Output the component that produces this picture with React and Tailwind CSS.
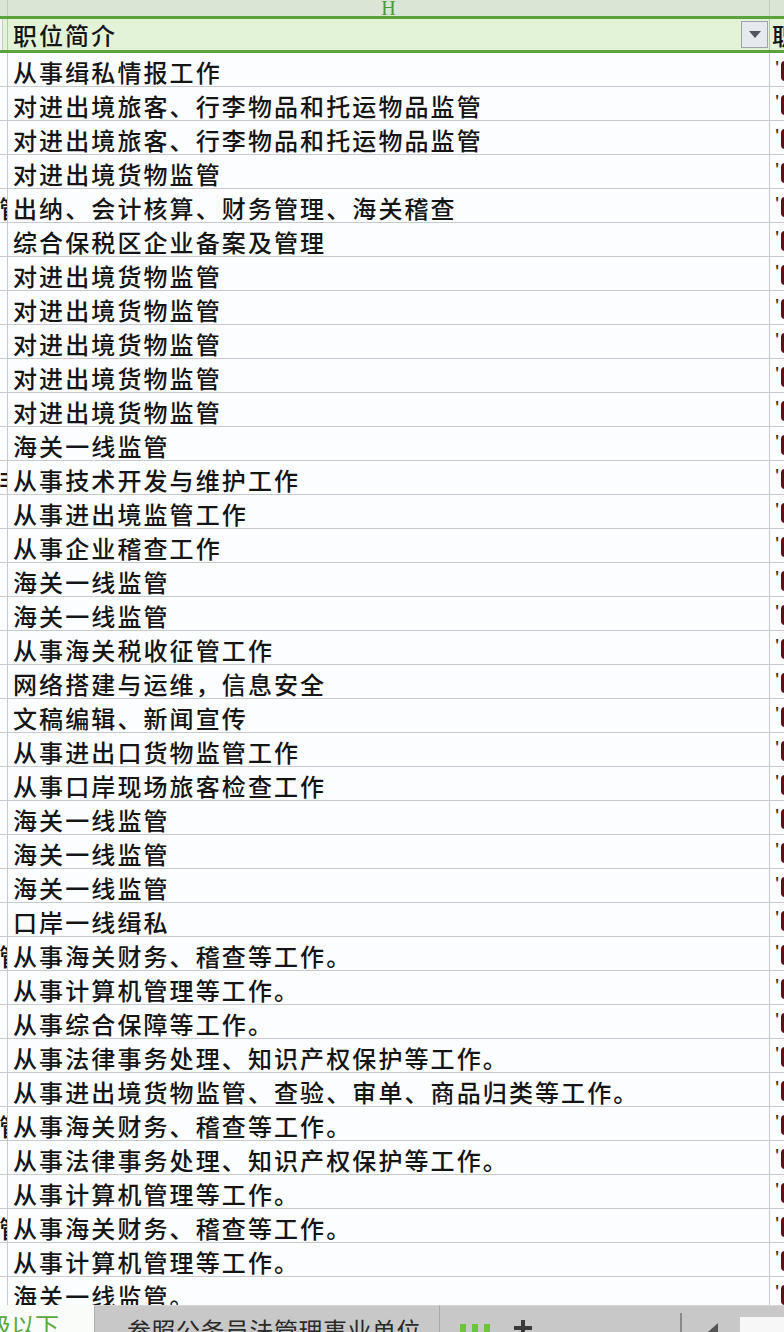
import React from "react";

const rows = [
  ["", "从事缉私情报工作"],
  ["", "对进出境旅客、行李物品和托运物品监管"],
  ["", "对进出境旅客、行李物品和托运物品监管"],
  ["", "对进出境货物监管"],
  ["管", "出纳、会计核算、财务管理、海关稽查"],
  ["", "综合保税区企业备案及管理"],
  ["", "对进出境货物监管"],
  ["", "对进出境货物监管"],
  ["", "对进出境货物监管"],
  ["", "对进出境货物监管"],
  ["", "对进出境货物监管"],
  ["", "海关一线监管"],
  ["非", "从事技术开发与维护工作"],
  ["", "从事进出境监管工作"],
  ["", "从事企业稽查工作"],
  ["", "海关一线监管"],
  ["", "海关一线监管"],
  ["", "从事海关税收征管工作"],
  ["", "网络搭建与运维，信息安全"],
  ["", "文稿编辑、新闻宣传"],
  ["", "从事进出口货物监管工作"],
  ["", "从事口岸现场旅客检查工作"],
  ["", "海关一线监管"],
  ["", "海关一线监管"],
  ["", "海关一线监管"],
  ["", "口岸一线缉私"],
  ["管", "从事海关财务、稽查等工作。"],
  ["", "从事计算机管理等工作。"],
  ["", "从事综合保障等工作。"],
  ["", "从事法律事务处理、知识产权保护等工作。"],
  ["", "从事进出境货物监管、查验、审单、商品归类等工作。"],
  ["管", "从事海关财务、稽查等工作。"],
  ["", "从事法律事务处理、知识产权保护等工作。"],
  ["", "从事计算机管理等工作。"],
  ["管", "从事海关财务、稽查等工作。"],
  ["", "从事计算机管理等工作。"],
  ["", "海关一线监管。"],
];

const cjk = { fontFamily: '"Noto Sans CJK SC", "Noto Sans", sans-serif' };

export default function App() {
  return (
    <div className="w-[784px] h-[1332px] overflow-hidden bg-white flex flex-col" style={cjk}>
      <div className="h-[1305px] overflow-hidden flex flex-col shrink-0">
        {/* column letter row */}
        <div className="h-[16px] flex bg-[#dbe5d6] shrink-0">
          <div className="w-[8px] border-r border-[#c3cbc0]" />
          <div className="w-[762px] flex justify-center items-end border-r border-[#c3cbc0] overflow-hidden">
            <span className="text-[20px] leading-[16px] text-[#4a9a36]" style={{ fontFamily: '"Liberation Serif", serif' }}>H</span>
          </div>
          <div className="flex-1" />
        </div>
        <div className="h-[3px] bg-[#5aa23c] shrink-0" />
        {/* filter header row */}
        <div className="h-[31px] flex bg-[#e3f3d8] shrink-0">
          <div className="w-[8px] flex">
            <div className="w-[3px] bg-[#f4f6f4] border-r border-[#c8ccc8]" />
            <div className="flex-1 border-r border-[#b9c4b5]" />
          </div>
          <div className="w-[762px] flex items-center border-r border-[#b9c4b5] relative pl-[5px]">
            <span className="text-[24px] tracking-[2px] font-medium text-[#151515] leading-none">职位简介</span>
            <div className="absolute right-[1px] top-[2px] w-[27px] h-[27px] bg-[#e6eaee] border border-[#9ea3aa] flex items-center justify-center">
              <svg width="12" height="7" viewBox="0 0 12 7"><path d="M0 0 L12 0 L6 7 Z" fill="#505560" /></svg>
            </div>
          </div>
          <div className="flex-1 overflow-hidden pl-[2px] flex items-center">
            <span className="text-[24px] font-medium text-[#151515] leading-none whitespace-nowrap">职位</span>
          </div>
        </div>
        <div className="h-[3px] bg-[#5aa23c] shrink-0" />
        {/* data rows */}
        {rows.map(([left, text], i) => (
          <div key={i} className="h-[34px] flex shrink-0 bg-[#fcfdff] border-b border-[#c9c9d4]">
            <div className="w-[8px] overflow-hidden flex justify-end items-center border-r border-[#c9c9d4]">
              {left && (
                <span className="text-[24px] font-medium leading-none text-[#151515] whitespace-nowrap translate-x-[16px] pt-[4px]">{left}</span>
              )}
            </div>
            <div className="w-[762px] flex items-center pl-[5px] pt-[4px] border-r border-[#c9c9d4] overflow-hidden">
              <span className="text-[24px] tracking-[2.1px] font-medium text-[#151515] leading-none whitespace-nowrap">{text}</span>
            </div>
            <div className="flex-1 overflow-hidden flex items-start pt-[6px] pl-[5px]">
              <span className="text-[13px] leading-none text-[#333] font-bold">'</span>
              <span className="ml-[2px] mt-[2px] w-[8px] h-[20px] rounded-full bg-[#5a1218] shrink-0" />
            </div>
          </div>
        ))}
      </div>
      {/* sheet tab bar */}
      <div className="flex-1 flex bg-[#c8c8c8] overflow-hidden">
        <div className="w-[95px] bg-[#fafcfa] border-r border-[#b0b0b0] overflow-hidden flex justify-end items-start pt-[8px] pr-[35px]">
          <span className="text-[24px] leading-none text-[#5aa83c] whitespace-nowrap">级以下</span>
        </div>
        <div className="w-[345px] border-t border-[#d6d6d6] border-r border-r-[#aaaaaa] overflow-hidden pl-[32px] pt-[12px]">
          <span className="text-[24px] leading-none text-[#2a2a2a] whitespace-nowrap tracking-[0.5px]">参照公务员法管理事业单位</span>
        </div>
        <div className="flex-1 border-t border-[#d6d6d6] flex items-start relative">
          <div className="flex gap-[6px] ml-[20px] mt-[18px]">
            <div className="w-[6px] h-[12px] bg-[#6cc43c]" />
            <div className="w-[6px] h-[12px] bg-[#6cc43c]" />
            <div className="w-[6px] h-[12px] bg-[#6cc43c]" />
          </div>
          <div className="ml-[24px] mt-[14px] relative w-[18px] h-[18px]">
            <div className="absolute left-[7px] top-0 w-[4px] h-[18px] bg-[#3a3a3a]" />
            <div className="absolute left-0 top-[6px] w-[18px] h-[4px] bg-[#3a3a3a]" />
          </div>
          <div className="ml-[148px] mt-[7px] w-[2px] h-[22px] bg-[#8a8a8a]" />
          <div className="ml-[26px] mt-[17px]">
            <svg width="10" height="14" viewBox="0 0 10 14"><path d="M10 0 L10 14 L0 9 Z" fill="#555" /></svg>
          </div>
          <div className="ml-[22px] mt-[11px] flex-1 h-[20px] bg-[#f7f7f7]" />
        </div>
      </div>
    </div>
  );
}
